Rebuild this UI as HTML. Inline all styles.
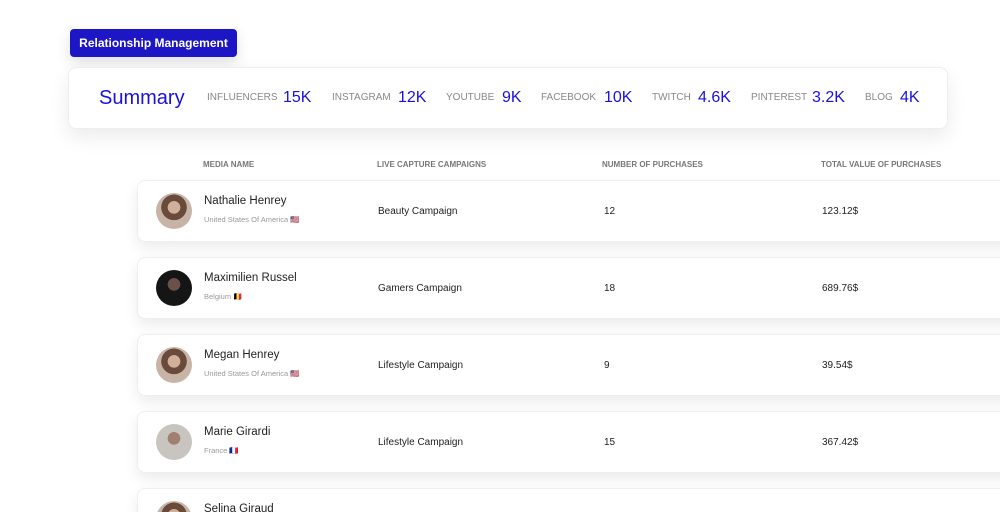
<!DOCTYPE html>
<html><head><style>
*{margin:0;padding:0;box-sizing:border-box}
html,body{width:1000px;height:512px;overflow:hidden}
body{background:#fff;font-family:"Liberation Sans",sans-serif;position:relative}
.btn{position:absolute;left:70px;top:29px;width:167px;height:28px;background:#1c16c4;border-radius:4px;color:#fff;font-size:12px;font-weight:bold;line-height:28px;text-align:center;box-shadow:0 6px 14px rgba(0,0,0,.12)}
.sum{position:absolute;left:68px;top:67px;width:880px;height:62px;background:#fff;border:1px solid #eee;border-radius:8px;box-shadow:0 8px 20px rgba(0,0,0,.08)}
.sum span{position:absolute;top:0;line-height:60px;white-space:nowrap}
.l{font-size:10px;color:#888}
.v{font-size:16px;color:#1a10e0}
.h{position:absolute;top:160px;font-size:8px;color:#777;font-weight:bold}
.card{position:absolute;left:137px;width:880px;height:62px;background:#fff;border:1px solid #eee;border-radius:8px;box-shadow:0 6px 14px rgba(0,0,0,.08)}
.av{position:absolute;left:18px;top:12px;width:36px;height:36px;border-radius:50%;background:radial-gradient(circle at 50% 40%,#d0b09a 0 22%,#6a4a3a 23% 45%,#c8b4a6 46%)}
.nm{position:absolute;left:66px;top:14px;font-size:11.5px;color:#222}
.ct{position:absolute;left:66px;top:34px;font-size:7.5px;color:#999}
.c{position:absolute;top:25px;font-size:10px;color:#222}
</style></head><body>
<div class="btn">Relationship Management</div>
<div class="sum">
<span class="v" style="left:30px;font-size:20px">Summary</span>
<span class="l" style="left:138px">INFLUENCERS</span><span class="v" style="left:214px">15K</span>
<span class="l" style="left:263px">INSTAGRAM</span><span class="v" style="left:329px">12K</span>
<span class="l" style="left:377px">YOUTUBE</span><span class="v" style="left:433px">9K</span>
<span class="l" style="left:472px">FACEBOOK</span><span class="v" style="left:535px">10K</span>
<span class="l" style="left:583px">TWITCH</span><span class="v" style="left:629px">4.6K</span>
<span class="l" style="left:682px">PINTEREST</span><span class="v" style="left:743px">3.2K</span>
<span class="l" style="left:796px">BLOG</span><span class="v" style="left:831px">4K</span>
</div>
<div class="h" style="left:203px">MEDIA NAME</div>
<div class="h" style="left:377px">LIVE CAPTURE CAMPAIGNS</div>
<div class="h" style="left:602px">NUMBER OF PURCHASES</div>
<div class="h" style="left:821px">TOTAL VALUE OF PURCHASES</div>

<div class="card" style="top:180px"><div class="av"></div><div class="nm">Nathalie Henrey</div><div class="ct">United States Of America 🇺🇸</div><div class="c" style="left:240px">Beauty Campaign</div><div class="c" style="left:466px">12</div><div class="c" style="left:684px">123.12$</div></div>
<div class="card" style="top:257px"><div class="av" style="background:radial-gradient(circle at 50% 40%,#6a5048 0 22%,#151515 23%)"></div><div class="nm">Maximilien Russel</div><div class="ct">Belgium 🇧🇪</div><div class="c" style="left:240px">Gamers Campaign</div><div class="c" style="left:466px">18</div><div class="c" style="left:684px">689.76$</div></div>
<div class="card" style="top:334px"><div class="av"></div><div class="nm">Megan Henrey</div><div class="ct">United States Of America 🇺🇸</div><div class="c" style="left:240px">Lifestyle Campaign</div><div class="c" style="left:466px">9</div><div class="c" style="left:684px">39.54$</div></div>
<div class="card" style="top:411px"><div class="av" style="background:radial-gradient(circle at 50% 40%,#a08070 0 22%,#c8c4c0 23%)"></div><div class="nm">Marie Girardi</div><div class="ct">France 🇫🇷</div><div class="c" style="left:240px">Lifestyle Campaign</div><div class="c" style="left:466px">15</div><div class="c" style="left:684px">367.42$</div></div>
<div class="card" style="top:488px"><div class="av"></div><div class="nm">Selina Giraud</div></div>
</body></html>
